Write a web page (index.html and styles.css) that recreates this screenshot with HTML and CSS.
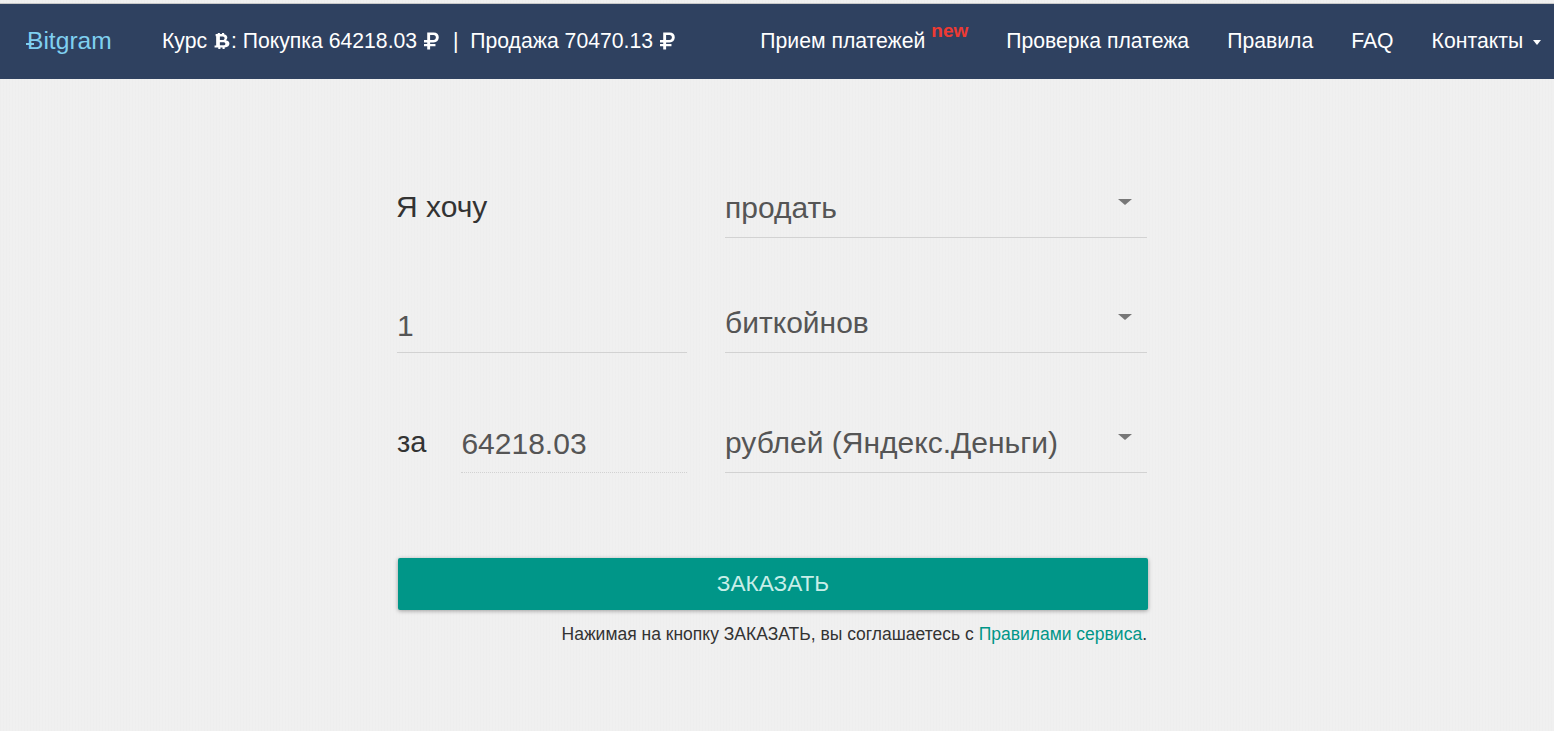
FILE: index.html
```html
<!DOCTYPE html>
<html lang="ru">
	<head>
		<meta charset="UTF-8" />
		<title>Bitgram</title>
		<link rel="stylesheet" href="styles.css">
	</head>
	<body>
		<nav class="navbar">
			<a class="brand" href="#">Bitgram</a>
			<div class="rate">
				Курс
				<svg class="icon-btc" viewBox="0 0 14 16"><path fill-rule="evenodd" d="M1 1h2V0h2v1h2V0h2v1.2c2 .4 3 1.6 3 3.1 0 1.1-.5 2-1.4 2.5C13.100 7.300 14 8.400 14 9.900c0 2-1.400 3.400-4.500 3.700V15H7.500v-1.300h-2V15h-2v-1.300H0v-2h1.500V3H1zM5 3.200v3.400h2.800c1 0 1.600-.7 1.600-1.700S8.800 3.200 7.800 3.200zM5 8.600v3h3.200c1.200 0 2-.6 2-1.500s-.8-1.500-2-1.500z"/></svg>: Покупка 64218.03
				<svg class="icon-rub" viewBox="0 0 14 16"><path fill-rule="evenodd" d="M3 0h6c3 0 4.800 1.700 4.800 4.600S12 9.300 9 9.300H5.700v1.400h5V13h-5v3H3v-3H0v-2.300h3V9.300H0V7h3zM5.700 2.300V7H8.800c1.500 0 2.300-.9 2.300-2.400s-.8-2.300-2.300-2.300z"/></svg>
				<span class="rate-sep">|</span>
				Продажа 70470.13
				<svg class="icon-rub" viewBox="0 0 14 16"><path fill-rule="evenodd" d="M3 0h6c3 0 4.800 1.700 4.800 4.600S12 9.300 9 9.300H5.700v1.400h5V13h-5v3H3v-3H0v-2.300h3V9.300H0V7h3zM5.700 2.300V7H8.800c1.500 0 2.300-.9 2.300-2.400s-.8-2.300-2.300-2.300z"/></svg>
			</div>
			<ul class="nav-links">
				<li><a href="#">Прием платежей <sup class="new-tag">new</sup></a></li>
				<li><a href="#">Проверка платежа</a></li>
				<li><a href="#">Правила</a></li>
				<li><a href="#">FAQ</a></li>
				<li><a href="#">Контакты <span class="nav-caret"></span></a></li>
			</ul>
		</nav>

		<main class="order">
			<form class="order-form">
				<div class="form-row row-first">
					<div class="left-col"><span class="want-label">Я хочу</span></div>
					<div class="select-box"><span>продать</span><span class="select-caret"></span></div>
				</div>
				<div class="form-row row-second">
					<div class="left-col"><div class="field">1</div></div>
					<div class="select-box"><span>биткойнов</span><span class="select-caret"></span></div>
				</div>
				<div class="form-row row-third">
					<div class="left-col split">
						<span class="for-label">за</span>
						<div class="field field-readonly">64218.03</div>
					</div>
					<div class="select-box"><span>рублей (Яндекс.Деньги)</span><span class="select-caret"></span></div>
				</div>
				<button class="order-btn" type="button">ЗАКАЗАТЬ</button>
				<p class="terms">Нажимая на кнопку ЗАКАЗАТЬ, вы соглашаетесь с <a href="#">Правилами сервиса</a>.</p>
			</form>
		</main>
	</body>
</html>
```

FILE: styles.css
```css
html, body {
	height: 100%;
}
body {
	margin: 0;
	overflow: hidden;
	box-sizing: border-box;
	padding-top: 3px;
	font-family: "Liberation Sans", Arial, sans-serif;
	color: #333;
	background-color: #f0f0f0;
	background-image: repeating-linear-gradient(90deg, rgba(0,0,0,0.006) 0 1px, transparent 1px 3px);
}
a {
	text-decoration: none;
}

/* top bar */
.navbar {
	display: flex;
	align-items: center;
	box-sizing: border-box;
	height: 76px;
	padding: 0 0 1px 27px;
	border-top: 1px solid #c8c8c8;
	background: #2f4160;
	color: #fff;
	font-size: 21.2px;
}
.brand {
	position: relative;
	width: 135px;
	font-size: 24.6px;
	color: #7fd0f0;
}
/* the stroke through the B of the logo */
.brand::after {
	content: "";
	position: absolute;
	left: -1px;
	top: 16px;
	width: 8px;
	height: 2px;
	background: #7fd0f0;
}
.rate {
	white-space: nowrap;
}
.rate-sep {
	margin: 0 6px 0 7px;
}
.icon-btc, .icon-rub {
	fill: #fff;
	vertical-align: -2px;
	margin: 0 1px;
}
.icon-btc {
	width: 16px;
	height: 17px;
}
.icon-rub {
	width: 15px;
	height: 18px;
}
.nav-links {
	display: flex;
	gap: 38px;
	margin: 0 0 0 auto;
	padding: 0 13px 0 0;
	list-style: none;
}
.nav-links a {
	color: #fff;
	white-space: nowrap;
}
.new-tag {
	color: #ee3a33;
	font-weight: bold;
	font-size: 19px;
	line-height: 0;
	vertical-align: 11px;
}
.nav-caret {
	display: inline-block;
	margin-left: 4px;
	vertical-align: 3px;
	border-top: 5px solid #fff;
	border-left: 4px solid transparent;
	border-right: 4px solid transparent;
}

/* order form */
.order {
	display: flex;
	justify-content: center;
}
.order-form {
	width: 751px;
	margin-right: 9px;
}
.form-row {
	display: grid;
	grid-template-columns: 290px 422px;
	column-gap: 38px;
}
.row-first {
	padding-top: 104px;
}
.row-second {
	padding-top: 60px;
}
.row-third {
	padding-top: 65px;
}
.left-col {
	align-self: end;
}
.split {
	display: flex;
	gap: 35px;
}
.want-label, .for-label {
	color: #333;
	font-size: 30px;
	line-height: 48px;
}
.want-label {
	position: relative;
	top: -7px;
	left: -1px;
	display: block;
}
.for-label {
	font-size: 29px;
}
.field {
	height: 54px;
	line-height: 56px;
	font-size: 30px;
	color: #555;
	border-bottom: 1px solid #d2d2d2;
}
.field-readonly {
	flex: 1;
	line-height: 52px;
	border-bottom: 1px dotted #d2d2d2;
}
.select-box {
	position: relative;
	display: flex;
	height: 54px;
	line-height: 50px;
	font-size: 30px;
	color: #555;
	border-bottom: 1px solid #d2d2d2;
}
.select-caret {
	position: absolute;
	right: 15px;
	top: 16px;
	border-top: 6px solid #777;
	border-left: 7px solid transparent;
	border-right: 7px solid transparent;
}
.order-btn {
	display: block;
	width: 750px;
	height: 52px;
	margin: 85px 0 0 1px;
	border: 0;
	border-radius: 2px;
	background: #009688;
	color: #c8eee8;
	font-family: inherit;
	font-size: 22.6px;
	box-shadow: 0 1px 4px rgba(0,0,0,0.35);
}
.terms {
	margin: 14px 1px 0 0;
	text-align: right;
	font-size: 17.5px;
	color: #333;
}
.terms a {
	color: #009688;
}
```
